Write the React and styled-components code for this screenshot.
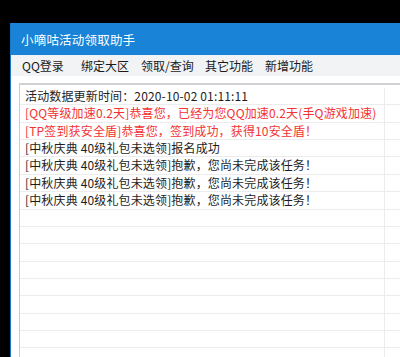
import React from "react";
import styled, { createGlobalStyle } from "styled-components";

const Global = createGlobalStyle`
  html, body { margin: 0; padding: 0; background: #000; overflow: hidden; }
  body { width: 400px; height: 357px; font-family: "Noto Sans CJK SC", "Microsoft YaHei", sans-serif; }
`;

const Window = styled.div`
  position: relative;
  top: 23px;
  margin-left: 10px;
  width: 420px;
  height: 360px;
  background: #fff;
  border-left: 1px solid #1a78c8;
  display: flex;
  flex-direction: column;
`;

const TitleBar = styled.div`
  flex: 0 0 32px;
  height: 32px;
  background: #1883d7;
  color: #fff;
  font-size: 12.5px;
  display: flex;
  align-items: center;
  padding-left: 10px;
  letter-spacing: 0.2px;
`;

const MenuBar = styled.div`
  flex: 0 0 21px;
  height: 21px;
  box-sizing: border-box;
  padding: 0 0 0 11px;
  background: #f2f3f5;
  display: flex;
  align-items: center;
`;

const MenuItem = styled.div`
  font-size: 12px;
  color: #1a1a1a;
  width: ${(p) => p.$w}px;
  white-space: nowrap;
`;

const Body = styled.div`
  flex: 0 0 auto;
  padding: 7px 0 0 8px;
`;

const List = styled.div`
  border-top: 2px solid #cfd0d4;
  border-left: 1px solid #c9cacd;
  padding-top: 3px;
  height: 300px;
  overflow: hidden;
`;

const Row = styled.div`
  height: 17.36px;
  box-sizing: border-box;
  border-bottom: 1px solid #ececec;
  display: grid;
  grid-template-columns: 365px 1fr;
`;

const Cell = styled.div`
  font-size: 12px;
  line-height: 16px;
  padding-left: 5px;
  letter-spacing: 0.15px;
  color: ${(p) => (p.$red ? "#f23333" : "#1e1e1e")};
  white-space: nowrap;
  overflow: hidden;
  border-right: 1px solid #ececec;
`;

const Side = styled.div``;

const lines = [
  { t: "活动数据更新时间：2020-10-02 01:11:11" },
  { t: "[QQ等级加速0.2天]恭喜您，已经为您QQ加速0.2天(手Q游戏加速)", red: true },
  { t: "[TP签到获安全盾]恭喜您，签到成功，获得10安全盾！", red: true },
  { t: "[中秋庆典 40级礼包未选领]报名成功" },
  { t: "[中秋庆典 40级礼包未选领]抱歉，您尚未完成该任务！" },
  { t: "[中秋庆典 40级礼包未选领]抱歉，您尚未完成该任务！" },
  { t: "[中秋庆典 40级礼包未选领]抱歉，您尚未完成该任务！" },
];

const menus = [
  ["QQ登录", 59],
  ["绑定大区", 60],
  ["领取/查询", 64],
  ["其它功能", 60],
  ["新增功能", 60],
];

export default function App() {
  const rows = [...lines];
  while (rows.length < 16) rows.push({ t: "" });
  return (
    <>
      <Global />
      <Window>
        <TitleBar>小嘀咕活动领取助手</TitleBar>
        <MenuBar>
          {menus.map(([m, w]) => (
            <MenuItem key={m} $w={w}>{m}</MenuItem>
          ))}
        </MenuBar>
        <Body>
          <List>
            {rows.map((r, i) => (
              <Row key={i}>
                <Cell $red={r.red}>{r.t}</Cell>
                <Side />
              </Row>
            ))}
          </List>
        </Body>
      </Window>
    </>
  );
}
